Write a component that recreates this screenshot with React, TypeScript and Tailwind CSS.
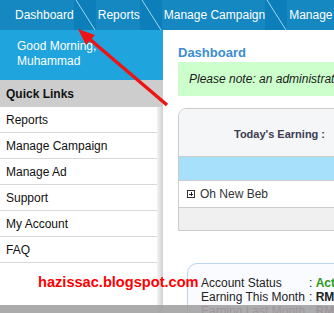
import React from 'react';

const navItems = ['Dashboard', 'Reports', 'Manage Campaign', 'Manage Ad'];
const quickLinks = ['Reports', 'Manage Campaign', 'Manage Ad', 'Support', 'My Account', 'FAQ'];

function NavSeparator() {
  return (
    <div className="relative w-[22px] h-full shrink-0 bg-[#0c7fba]">
      <svg className="absolute inset-0" width="22" height="30" viewBox="0 0 22 30">
        <line x1="2" y1="0" x2="21" y2="30" stroke="#9fd4ef" strokeWidth="1" />
      </svg>
    </div>
  );
}

export default function App() {
  return (
    <div className="relative w-[334px] h-[313px] overflow-hidden bg-white font-['Liberation_Sans',Arial,sans-serif] text-[12px] text-[#111]">
      {/* Top nav */}
      <div className="h-[30px] bg-[#1587c1] flex items-stretch text-white whitespace-nowrap pl-[15px]">
        {navItems.map((item, i) => (
          <React.Fragment key={item}>
            <span className={`flex items-center ${i > 0 ? 'ml-[2px]' : ''}`}>{item}</span>
            {i < navItems.length - 1 && <NavSeparator />}
          </React.Fragment>
        ))}
      </div>

      <div className="flex">
        {/* Sidebar */}
        <div className="w-[163px] shrink-0 flex flex-col">
          <div className="h-[50px] bg-[#20a4de] pl-[17px] pt-[9px] leading-[15px] text-white">
            Good Morning,
            <br />
            Muhammad
          </div>
          <div className="h-[27px] bg-[#cdcdcd] pl-[6px] flex items-center font-bold">Quick Links</div>
          <div className="flex h-[210px]">
            <div className="w-[157px] flex flex-col">
              {quickLinks.map((link) => (
                <div key={link} className="h-[26px] border-b border-[#d9d9d9] pl-[6px] flex items-center">
                  {link}
                </div>
              ))}
            </div>
            <div className="w-[6px] bg-linear-to-r from-[#f3f3f3] to-[#d2d2d2]" />
          </div>
        </div>

        {/* Main */}
        <div className="flex-1 min-w-0 pl-[15px] pt-[15px] whitespace-nowrap">
          <h2 className="text-[13px] leading-[16px] font-bold text-[#3a8dd0]">Dashboard</h2>
          <div className="mt-[1px] w-[320px] h-[34px] bg-[#ccffcc] pl-[11px] flex items-center italic text-[#1a1a1a]">
            Please note: an administrator will review your account
          </div>

          <div className="mt-[12px] w-[320px] border border-[#cccccc] rounded-tl-[8px] overflow-hidden">
            <div className="h-[48px] bg-[#f5f6f8] pl-[55px] pt-[4px] flex items-center text-[11px] font-bold text-[#3c3c50] border-b border-[#cccccc]">
              <span>Today's Earning :</span>
              <span className="ml-[40px]">RM 0.00</span>
            </div>
            <div className="h-[24px] bg-[#a6e0fa] border-b border-[#cccccc]" />
            <div className="h-[27px] bg-white flex items-center pl-[8px] gap-[5px] text-[#333] border-b border-[#cccccc]">
              <span className="relative w-[8px] h-[8px] border border-[#333] bg-white">
                <span className="absolute left-[1px] top-[2.5px] w-[4px] h-[1px] bg-[#222]" />
                <span className="absolute left-[2.5px] top-[1px] w-[1px] h-[4px] bg-[#222]" />
              </span>
              <span>Oh New Beb</span>
            </div>
            <div className="h-[22px] bg-[#f0f0f0]" />
          </div>

          <div className="mt-[32px] ml-[9px] w-[320px] border border-[#b9d3f0] rounded-tl-[10px] bg-[#fafbfe] pl-[13px] pt-[12px] leading-[14px] text-[#222]">
            <div className="flex">
              <span className="w-[108px]">Account Status</span>
              <span>: <span className="font-bold text-[#2a9a1a]">Active</span></span>
            </div>
            <div className="flex">
              <span className="w-[108px]">Earning This Month</span>
              <span>: <span className="font-bold">RM 0.00</span></span>
            </div>
            <div className="flex text-[#7a1a5a]">
              <span className="w-[108px]">Earning Last Month</span>
              <span>: <span className="font-bold">RM 0.00</span></span>
            </div>
          </div>
        </div>
      </div>

      {/* Watermark */}
      <div className="absolute left-[38px] top-[274px] text-[14.6px] leading-[16px] font-bold text-[#ff0000]">
        hazissac.blogspot.com
      </div>

      {/* Bottom bar */}
      <div className="absolute left-0 right-0 bottom-0 h-[8px] bg-[#a2a2a2]/90" />

      {/* Red arrow */}
      <svg className="absolute inset-0 pointer-events-none" width="334" height="313" viewBox="0 0 334 313">
        <line x1="167" y1="105" x2="86" y2="36" stroke="#ee1414" strokeWidth="3.5" />
        <polygon points="78,29 95,35 86,45" fill="#ee1414" />
      </svg>
    </div>
  );
}
